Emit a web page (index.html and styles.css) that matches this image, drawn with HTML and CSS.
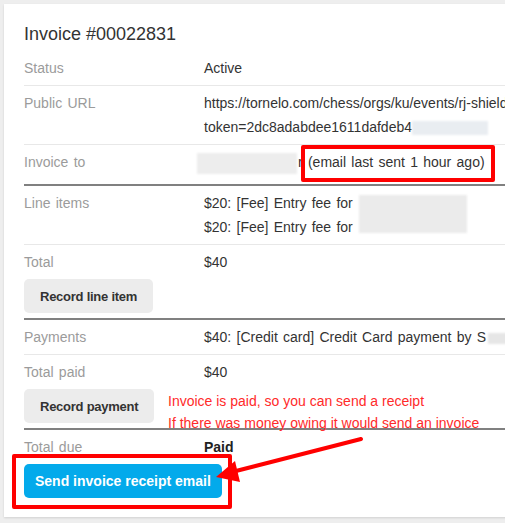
FILE: index.html
```html
<!DOCTYPE html>
<html lang="en">
<head>
  <meta charset="utf-8">
  <title>Invoice #00022831</title>
  <link rel="stylesheet" href="styles.css">
</head>
<body>
  <div class="page">
    <div class="card">
      <h2 class="title">Invoice #00022831</h2>

      <div class="section">
        <div class="row">
          <div class="label">Status</div>
          <div class="value">Active</div>
        </div>
        <div class="row">
          <div class="label">Public URL</div>
          <div class="value">
            <div>https://tornelo.com/chess/orgs/ku/events/rj-shield-2023/invoices/00022831?</div>
            <div>token=2dc8adabdee1611dafdeb4<span class="blur blur-token"></span></div>
          </div>
        </div>
        <div class="row">
          <div class="label">Invoice to</div>
          <div class="value"><span class="blur blur-name"></span>r (email last sent 1 hour ago)</div>
        </div>
      </div>

      <div class="section">
        <div class="row">
          <div class="label">Line items</div>
          <div class="value items">
            <div>$20: [Fee] Entry fee for</div>
            <div>$20: [Fee] Entry fee for</div>
            <span class="blur blur-items"></span>
          </div>
        </div>
        <div class="row plain">
          <div class="label">Total</div>
          <div class="value">$40</div>
        </div>
        <button class="btn">Record line item</button>
      </div>

      <div class="section">
        <div class="row">
          <div class="label">Payments</div>
          <div class="value">$40: [Credit card] Credit Card payment by S<span class="blur blur-payer"></span></div>
        </div>
        <div class="row">
          <div class="label">Total paid</div>
          <div class="value">$40</div>
        </div>
        <button class="btn">Record payment</button>
      </div>

      <div class="section last">
        <div class="row">
          <div class="label">Total due</div>
          <div class="value strong">Paid</div>
        </div>
        <button class="btn btn-primary">Send invoice receipt email</button>
      </div>
    </div>

    <!-- annotations drawn over the page -->
    <div class="mark mark-email"></div>
    <div class="mark mark-send"></div>
    <p class="note">Invoice is paid, so you can send a receipt<br>If there was money owing it would send an invoice</p>
    <svg class="arrow" width="505" height="523" viewBox="0 0 505 523">
      <line x1="361" y1="439" x2="232" y2="472" stroke="#ff0000" stroke-width="4" stroke-linecap="round"/>
      <polygon points="216,477 235,461 240,482" fill="#ff0000"/>
    </svg>
  </div>
</body>
</html>
```

FILE: styles.css
```css
html, body {
  margin: 0;
  background: #eeeeee;
}
body {
  font-family: "Liberation Sans", Arial, sans-serif;
  font-size: 14px;
  color: #333333;
}
.page {
  position: relative;
  width: 505px;
  height: 523px;
  overflow: hidden;
}
.card {
  margin: 4px 0 0 4px;
  width: 640px;
  background: #ffffff;
  padding: 20px 20px 14px 20px;
  box-shadow: 0 1px 2px rgba(0, 0, 0, 0.12);
}
h2.title {
  margin: 0 0 7px 0;
  font-size: 18px;
  font-weight: normal;
  line-height: 20px;
  color: #333333;
}

.section {
  padding-bottom: 5px;
  border-bottom: 2px solid #808080;
}
.section.last {
  border-bottom: none;
}
.row {
  display: grid;
  grid-template-columns: 180px 1fr;
  padding: 5px 0;
  line-height: 24px;
  word-spacing: 1.4px;
  border-top: 1px solid #e8e8e8;
}
.row:first-child {
  border-top: none;
}
.row.plain {
  border-top: 1px solid #e8e8e8;
}
.label {
  color: #9b9b9b;
}
.value {
  white-space: nowrap;
}
.value.items {
  position: relative;
}
.value.strong {
  font-weight: bold;
  color: #222222;
}

.blur {
  display: inline-block;
  vertical-align: middle;
  background: #ebebeb;
  filter: blur(1px);
}
.blur-token {
  width: 76px;
  height: 14px;
  background: #e9edf1;
}
.blur-name {
  width: 100px;
  height: 21px;
  margin-left: -7px;
  margin-right: 1px;
  background: #ededed;
}
/* redaction laid over both line items */
.blur-items {
  position: absolute;
  left: 155px;
  top: 4px;
  width: 108px;
  height: 38px;
  background: #ebebeb;
}
.blur-payer {
  width: 30px;
  height: 11px;
  margin-left: 2px;
  background: #e6e6e6;
}

.btn {
  display: block;
  height: 34px;
  margin: 0;
  padding: 0 16px;
  border: none;
  border-radius: 5px;
  background: #ececec;
  color: #333333;
  font-family: "Liberation Sans", Arial, sans-serif;
  font-size: 13px;
  letter-spacing: -0.25px;
  font-weight: bold;
}
.btn-primary {
  padding: 0 11px;
  background: #03aaeb;
  color: #ffffff;
  font-size: 14px;
  letter-spacing: 0;
}

/* annotations */
.mark {
  position: absolute;
  box-sizing: border-box;
  border: 4px solid #ff0000;
  border-radius: 2px;
}
.mark-email {
  left: 301px;
  top: 145px;
  width: 194px;
  height: 37px;
}
.mark-send {
  left: 12px;
  top: 454px;
  width: 220px;
  height: 55px;
}
.note {
  position: absolute;
  left: 168px;
  top: 390px;
  margin: 0;
  line-height: 22px;
  color: #ff2a2a;
  white-space: nowrap;
}
.arrow {
  position: absolute;
  left: 0;
  top: 0;
  pointer-events: none;
}
```
